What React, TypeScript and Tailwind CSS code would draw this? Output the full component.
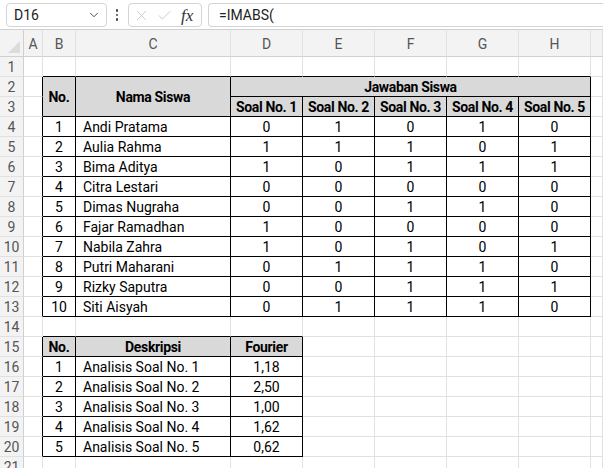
import { ChevronDown, X, Check } from "lucide-react";
import type { ReactNode } from "react";

const COL = ["", "col-start-1", "col-start-2", "col-start-3", "col-start-4", "col-start-5", "col-start-6", "col-start-7", "col-start-8", "col-start-9", "col-start-10"];
const ROW = ["", "row-start-1", "row-start-2", "row-start-3", "row-start-4", "row-start-5", "row-start-6", "row-start-7", "row-start-8", "row-start-9", "row-start-10", "row-start-11", "row-start-12", "row-start-13", "row-start-14", "row-start-15", "row-start-16", "row-start-17", "row-start-18", "row-start-19", "row-start-20", "row-start-21", "row-start-22"];

const students: [string, number[]][] = [
  ["Andi Pratama", [0, 1, 0, 1, 0]],
  ["Aulia Rahma", [1, 1, 1, 0, 1]],
  ["Bima Aditya", [1, 0, 1, 1, 1]],
  ["Citra Lestari", [0, 0, 0, 0, 0]],
  ["Dimas Nugraha", [0, 0, 1, 1, 0]],
  ["Fajar Ramadhan", [1, 0, 0, 0, 0]],
  ["Nabila Zahra", [1, 0, 1, 0, 1]],
  ["Putri Maharani", [0, 1, 1, 1, 0]],
  ["Rizky Saputra", [0, 0, 1, 1, 1]],
  ["Siti Aisyah", [0, 1, 1, 1, 0]],
];

const fourier = ["1,18", "2,50", "1,00", "1,62", "0,62"];

type Cell = {
  r: number; // sheet row
  c: number; // sheet column, A = 1
  rs?: string;
  cs?: string;
  head?: boolean;
  left?: boolean;
  text: ReactNode;
};

// build the table cells
const cells: Cell[] = [
  { r: 2, c: 2, rs: "row-span-2", head: true, text: "No." },
  { r: 2, c: 3, rs: "row-span-2", head: true, text: "Nama Siswa" },
  { r: 2, c: 4, cs: "col-span-5", head: true, text: "Jawaban Siswa" },
];
for (let i = 0; i < 5; i++) cells.push({ r: 3, c: 4 + i, head: true, text: `Soal No. ${i + 1}` });
students.forEach(([name, ans], i) => {
  cells.push({ r: 4 + i, c: 2, text: i + 1 });
  cells.push({ r: 4 + i, c: 3, left: true, text: name });
  ans.forEach((a, j) => cells.push({ r: 4 + i, c: 4 + j, text: a }));
});
cells.push({ r: 15, c: 2, head: true, text: "No." });
cells.push({ r: 15, c: 3, head: true, text: "Deskripsi" });
cells.push({ r: 15, c: 4, head: true, text: "Fourier" });
fourier.forEach((f, i) => {
  cells.push({ r: 16 + i, c: 2, text: i + 1 });
  cells.push({ r: 16 + i, c: 3, left: true, text: `Analisis Soal No. ${i + 1}` });
  cells.push({ r: 16 + i, c: 4, text: f });
});

const covered = new Set<string>();
cells.forEach((cl) => {
  const h = cl.rs ? 2 : 1;
  const w = cl.cs ? 5 : 1;
  for (let y = 0; y < h; y++) for (let x = 0; x < w; x++) covered.add(`${cl.r + y}:${cl.c + x}`);
});

const letters = ["A", "B", "C", "D", "E", "F", "G", "H", ""];

export default function App() {
  const blanks: ReactNode[] = [];
  for (let r = 1; r <= 21; r++) {
    for (let c = 1; c <= 9; c++) {
      if (covered.has(`${r}:${c}`)) continue;
      const below = covered.has(`${r + 1}:${c}`);
      const right = covered.has(`${r}:${c + 1}`);
      blanks.push(
        <div
          key={`b${r}-${c}`}
          className={`${ROW[r + 1]} ${COL[c + 1]} border-r border-b ${below ? "border-b-black" : "border-b-[#e1e1e1]"} ${right ? "border-r-black" : "border-r-[#e1e1e1]"}`}
        />
      );
    }
  }

  return (
    <div className="h-[468px] w-[603px] overflow-hidden bg-white font-['Roboto',sans-serif] text-black">
      {/* Formula bar */}
      <div className="flex h-[29px] items-center bg-white pt-px">
        <div className="ml-[6px] flex h-[24px] w-[101px] items-center justify-between rounded-[4px] border border-[#d4d4d4] pl-[7px] pr-[5px] text-[14px] text-[#222]">
          <span>D16</span>
          <ChevronDown className="h-[14px] w-[14px] text-[#444]" strokeWidth={1.6} />
        </div>
        <div className="ml-[7px] flex w-[6px] flex-col items-center gap-[2px]">
          <span className="h-[2.5px] w-[2.5px] rounded-full bg-[#444]" />
          <span className="h-[2.5px] w-[2.5px] rounded-full bg-[#444]" />
          <span className="h-[2.5px] w-[2.5px] rounded-full bg-[#444]" />
        </div>
        <div className="ml-[8px] flex h-[24px] w-[74px] items-center rounded-[4px] border border-[#d4d4d4] pl-[4px]">
          <X className="h-[17px] w-[17px] text-[#c4c4c4]" strokeWidth={1.2} />
          <Check className="ml-[6px] h-[17px] w-[17px] text-[#c4c4c4]" strokeWidth={1.2} />
          <span className="ml-[8px] font-['Liberation_Serif',serif] text-[17px] italic leading-none text-[#333]">fx</span>
        </div>
        <div className="ml-[6px] flex h-[24px] flex-1 items-center rounded-l-[4px] border border-r-0 border-[#d4d4d4] pl-[10px] text-[14px] text-[#222]">
          =IMABS(
        </div>
      </div>

      {/* Sheet */}
      <div className="grid h-[439px] grid-cols-[24px_19px_33px_155px_72px_72px_72px_72px_72px_1fr] grid-rows-[28px_repeat(21,20px)] overflow-hidden">
        {/* corner */}
        <div className="row-start-1 col-start-1 flex items-end justify-end border-t border-r border-b border-[#d0d0d0] bg-[#f3f3f3] p-[3px]">
          <div className="h-0 w-0 border-b-[12px] border-l-[12px] border-b-[#dcdcdc] border-l-transparent" />
        </div>
        {letters.map((l, i) => (
          <div
            key={`h${i}`}
            className={`row-start-1 ${COL[i + 2]} flex items-center justify-center border-t border-r border-b border-t-[#d0d0d0] border-r-[#e0e0e0] border-b-[#d0d0d0] bg-[#f3f3f3] pt-[2px] text-[14px] text-[#555]`}
          >
            {l}
          </div>
        ))}
        {Array.from({ length: 21 }, (_, i) => (
          <div
            key={`r${i}`}
            className={`${ROW[i + 2]} col-start-1 flex items-center justify-center border-r border-b border-r-[#d0d0d0] border-b-[#e1e1e1] bg-[#f3f3f3] pt-px text-[14px] text-[#555]`}
          >
            {i + 1}
          </div>
        ))}
        {blanks}
        {cells.map((cl, i) => (
          <div
            key={`c${i}`}
            className={`${ROW[cl.r + 1]} ${COL[cl.c + 1]} ${cl.rs ?? ""} ${cl.cs ?? ""} flex items-center overflow-hidden whitespace-nowrap border-r border-b border-black pt-px text-[14px] ${cl.head ? "bg-[#d9d9d9] font-bold tracking-[-0.35px]" : ""} ${cl.left ? "justify-start pl-[7px]" : "justify-center"}`}
          >
            {cl.text}
          </div>
        ))}
      </div>
    </div>
  );
}
